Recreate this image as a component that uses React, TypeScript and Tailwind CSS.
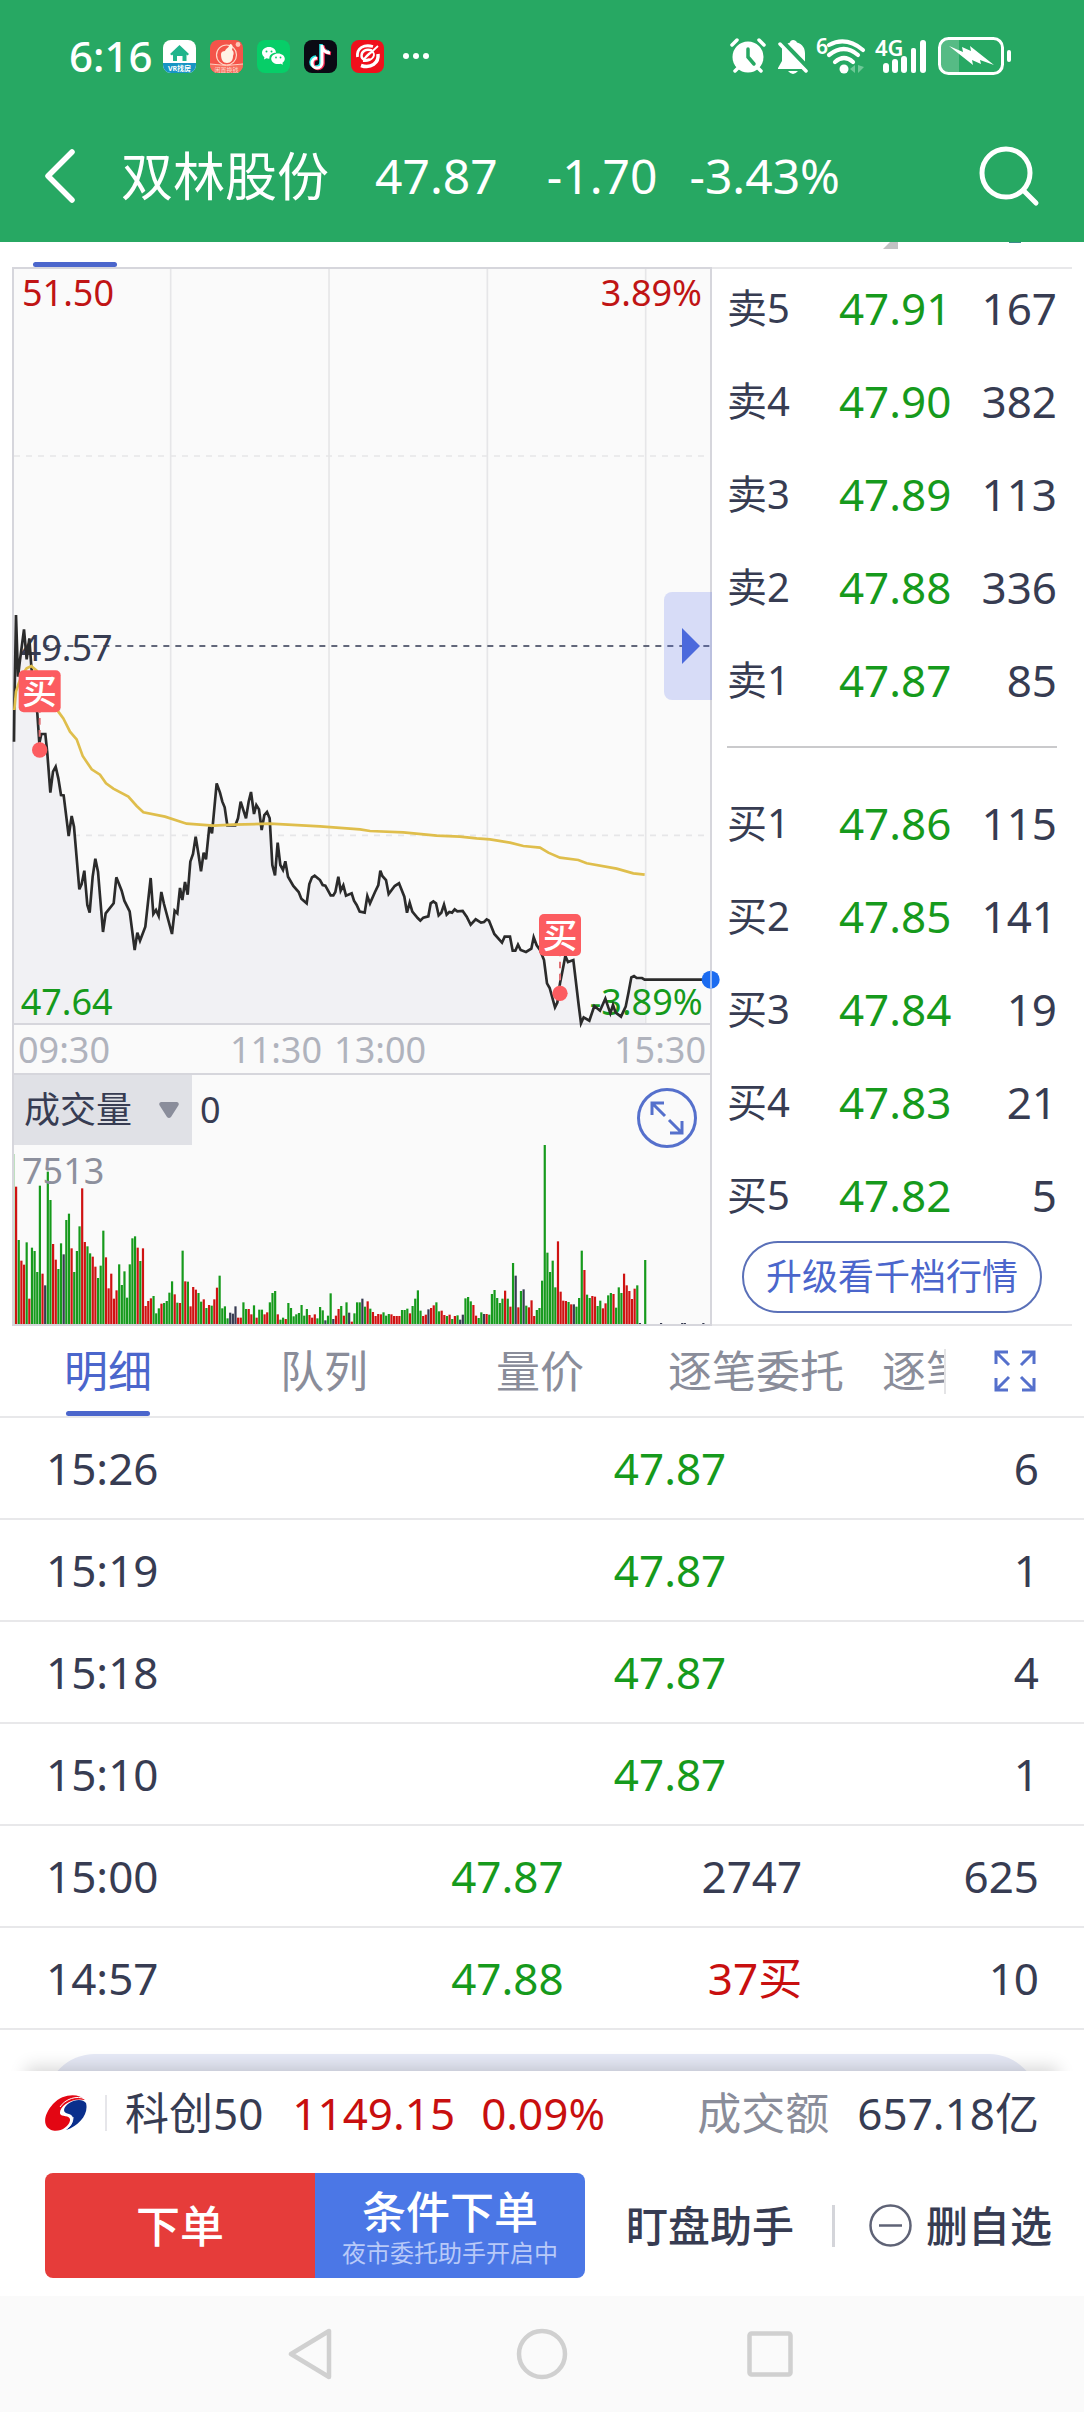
import React from "react";

/* Chart geometry: three drawing units per pixel. */
const PRICE_LINE =
  "42,425 43,330 48,45 54,230 60,180 72,88 80,178 88,115 94,200 104,300 112,340 118,430 124,402 136,402 142,460 151,578 159,515 167,500 175,535 183,585 191,586 206,708 215,648 222,680 238,868 245,852 253,812 262,915 269,938 278,830 286,776 294,815 309,996 317,940 341,910 349,832 365,872 373,902 389,934 404,1050 412,998 420,1022 436,980 452,834 460,942 468,930 476,948 484,876 492,912 516,1002 524,932 532,940 540,864 547,900 555,846 563,884 571,785 579,762 587,710 595,760 603,814 611,758 618,778 628,680 636,700 650,550 660,578 667,605 674,622 682,676 706,676 714,655 722,605 738,655 746,605 753,576 762,642 769,615 777,628 785,690 793,645 801,636 809,655 817,795 825,826 833,728 841,795 849,810 856,784 864,830 880,858 896,876 904,896 920,910 928,852 936,832 944,827 960,840 968,855 976,857 992,886 1000,886 1006,876 1015,830 1022,872 1030,856 1038,887 1055,880 1062,902 1070,915 1079,935 1094,938 1102,888 1110,910 1125,876 1135,855 1141,812 1147,828 1158,840 1166,882 1184,858 1197,850 1213,890 1221,938 1229,908 1237,935 1253,954 1261,962 1270,953 1285,949 1292,910 1300,904 1308,910 1316,946 1324,938 1332,914 1340,944 1348,936 1356,938 1364,928 1372,934 1388,933 1400,950 1412,974 1427,958 1443,968 1452,966 1460,958 1467,962 1483,1002 1506,1028 1514,1010 1530,1010 1538,1052 1546,1052 1554,1034 1562,1050 1578,1056 1594,1046 1601,1012 1610,1036 1620,1050 1632,1080 1641,1150 1649,1164 1665,1222 1672,1208 1680,1150 1688,1110 1696,1068 1704,1086 1720,1080 1736,1215 1743,1270 1751,1252 1768,1262 1783,1218 1800,1232 1816,1196 1831,1240 1839,1215 1847,1238 1863,1250 1877,1220 1886,1175 1894,1132 1902,1128 1910,1134 1926,1134 1934,1139";

const AVERAGE_LINE =
  "43,330 48,275 56,250 66,225 80,205 94,198 110,212 140,270 175,335 190,355 210,395 230,418 248,468 275,508 300,524 318,550 340,566 385,590 410,618 430,637 495,650 560,671 640,677 700,674 809,671 960,679 1080,688 1110,693 1210,697 1310,707 1380,710 1430,715 1470,718 1530,728 1570,738 1620,743 1645,758 1680,773 1735,780 1760,790 1850,806 1900,820 1934,824";

/* One bar per minute: colour letter and the y of the bar's top. */
const VOLUME_BARS =
  "r380 g540 r602 r614 g547 r716 g563 g573 g636 g377 r641 k676 g335 g420 r552 r599 g627 g550 k583 g480 g461 r565 g636 g573 g499 r385 r546 g559 g580 r590 r620 g654 g617 g512 r592 r685 r641 r716 r691 g613 g675 g634 g713 g613 g535 g529 r563 g603 r565 r738 r723 r715 g708 g760 g745 r731 g729 g723 g698 g664 r703 g728 r729 g572 r664 g665 r739 r681 r689 g699 g725 r718 g744 r735 g737 r718 r683 g647 g745 g739 g775 k758 k761 k739 r773 r773 g727 g747 r747 r763 g736 r773 g749 g749 r763 r757 g727 g699 g693 r763 g779 g773 r777 g729 g744 g769 g763 g759 g735 g767 g747 r765 r773 r763 g775 g741 g751 k781 g767 g700 k777 r767 r747 g738 r767 g727 k758 r785 g760 g727 g727 k716 g740 r724 g746 r756 r768 r762 r763 g757 g767 g762 r763 r768 r768 r768 g750 g750 g746 r760 g738 g716 g691 g752 r768 r764 k748 r744 r736 g727 g754 r752 r765 g768 r764 g777 r768 g766 k779 k764 g715 g711 g724 r735 r767 g774 g757 k762 r762 g764 g702 g690 g714 g729 g716 r692 g716 r740 g609 k647 r742 g693 k688 g737 r742 r721 r768 g750 g744 g662 g255 g578 g636 g602 g682 r544 r695 r722 r723 g726 r733 k733 g740 g714 g572 r630 g704 g714 r708 r710 g738 g722 r745 r730 g706 g699 r702 g743 g682 g699 r641 r676 r693 r717 r686 g676 k789 k792 g600 k792 k792 k792 k792 k792 k789 k792 k792 k792 k792 k792 k792 k792 k789 k789 k792 k792 k792 k792 k792 k792 k789";

const BAR_FILL: Record<string, string> = { g: "#169a1c", r: "#cf1212", k: "#373c52" };

const SELLS = [
  ["卖5", "47.91", "167"],
  ["卖4", "47.90", "382"],
  ["卖3", "47.89", "113"],
  ["卖2", "47.88", "336"],
  ["卖1", "47.87", "85"],
];
const BUYS = [
  ["买1", "47.86", "115"],
  ["买2", "47.85", "141"],
  ["买3", "47.84", "19"],
  ["买4", "47.83", "21"],
  ["买5", "47.82", "5"],
];

const TRADES = [
  { time: "15:26", price: "47.87", qty: "6" },
  { time: "15:19", price: "47.87", qty: "1" },
  { time: "15:18", price: "47.87", qty: "4" },
  { time: "15:10", price: "47.87", qty: "1" },
  { time: "15:00", price: "47.87", count: "2747", qty: "625" },
  { time: "14:57", price: "47.88", count: "37买", up: true, qty: "10" },
];

function StatusBar() {
  return (
    <div className="flex h-28 items-center pl-[69px] pr-[72px] text-white">
      <span className="w-[94px] text-[42px] leading-[56px] font-medium">6:16</span>
      <div className="flex gap-[14px]">
        <svg className="size-[33px]" viewBox="0 0 33 33">
          <rect width="33" height="33" rx="8" fill="#fff" />
          <path d="M0 23h33v2a8 8 0 0 1-8 8H8a8 8 0 0 1-8-8z" fill="#1795c4" />
          <path d="M16.500 5 26 14l-1.500 1.500-1-1V21h-4v-5h-5.500v5h-4v-6.500l-1 1L7 14z" fill="#20b58c" />
          <text x="16.500" y="31" textAnchor="middle" fontSize="7" fontWeight="700" fill="#fff">VR找房</text>
        </svg>
        <svg className="size-[33px]" viewBox="0 0 33 33">
          <rect width="33" height="33" rx="8" fill="#f4544a" />
          <circle cx="16.500" cy="15" r="10" fill="none" stroke="#ffd9c8" strokeWidth="1.200" />
          <path d="M11 14c0-2 2-3 4-3 1-3 4-3 5-7 3 0 3 3 2 6 2 1 2 4 1 6 0 4-2 7-6 7-4 0-6-3-6-9z" fill="#fff1e4" />
          <circle cx="28" cy="4.500" r="2.400" fill="#ffc2b4" />
          <path d="M0 24q16.500 3 33 0v1a8 8 0 0 1-8 8H8a8 8 0 0 1-8-8z" fill="#f76d5c" />
          <path d="M0 24q16.500 3 33 0" fill="none" stroke="#ffd0c0" />
          <text x="16.500" y="32" textAnchor="middle" fontSize="6" fill="#ffd8cc">闲置换钱</text>
        </svg>
        <svg className="size-[33px]" viewBox="0 0 33 33">
          <rect width="33" height="33" rx="8" fill="#07ce68" />
          <path d="M12 7c4.200 0 7 2.700 7 5.800-4.200 0-7 2.400-6.500 5.800-1 .1-2 0-3-.3L7 19.600l.4-2.300C6 16.200 5 14.700 5 12.800 5 9.600 8 7 12 7z" fill="#fff" />
          <path d="M21 13.500c3.800 0 6.800 2.300 6.800 5.300 0 1.700-.9 3-2.300 4l.3 2-2-1c-.9.200-1.800.3-2.800.3-3.800 0-6.800-2.300-6.800-5.300s3-5.300 6.800-5.300z" fill="#fff" />
          <circle cx="9.500" cy="11.500" r="1" fill="#07ce68" />
          <circle cx="14.500" cy="11.500" r="1" fill="#07ce68" />
          <circle cx="19" cy="17.500" r=".9" fill="#07ce68" />
          <circle cx="23.500" cy="17.500" r=".9" fill="#07ce68" />
        </svg>
        <svg className="size-[33px]" viewBox="0 0 33 33" fill="none" strokeWidth="3.600">
          <rect width="33" height="33" rx="8" fill="#0a0a14" />
          <path d="M17 4v18a5 5 0 1 1-5-5M17 5c.5 4 3.500 6.500 8 7" stroke="#27e8e4" />
          <path d="M19 5.500v18a5 5 0 1 1-5-5M19 6.500c.5 4 3.500 6.500 8 7" stroke="#fb2b55" />
          <path d="M18 5v18a5 5 0 1 1-5-5M18 6c.5 4 3.500 6.500 8 7" stroke="#fff" strokeWidth="3" />
        </svg>
        <svg className="size-[33px]" viewBox="0 0 33 33" fill="none" stroke="#fff">
          <rect width="33" height="33" rx="8" fill="#f0101c" stroke="none" />
          <path d="M22 6.500C13 4 5.500 8 6.500 17" strokeWidth="2.800" />
          <path d="M27 14c1 9-7 15-17 11.500" strokeWidth="3.500" />
          <path d="M21 10.500c-6-2-10.500.5-10.500 5.500 0 4 6 5 8.500 3" strokeWidth="2.400" />
          <path d="M27 6 13 19c3-4 6-7 9-7 3 4-2 10-10 9" strokeWidth="1.800" />
        </svg>
      </div>
      <svg className="ml-[18px] h-2 w-7" viewBox="0 0 28 8" fill="#fff">
        <circle cx="4" cy="4" r="3" />
        <circle cx="14" cy="4" r="3" />
        <circle cx="24" cy="4" r="3" />
      </svg>
      <div className="ml-auto flex items-center">
        <svg className="h-9 w-9" viewBox="0 0 36 36" fill="none" stroke="#fff" strokeLinecap="round">
          <circle cx="18" cy="19" r="15.500" fill="#fff" stroke="none" />
          <path d="M2 7 7 2M34 7l-5-5M5 33l5-5M31 33l-5-5" strokeWidth="3.500" />
          <path d="M18 11v8l6 7" stroke="#27a863" strokeWidth="3.500" />
        </svg>
        <svg className="ml-3 h-9 w-[30px]" viewBox="0 0 30 36">
          <path d="M9.500 5.500 12 4.500C12 1 18 1 19 4.500c6 2 8 6 8 11v8z" fill="#fff" />
          <path d="M4 9v14l-4 7v1h25z" fill="#fff" />
          <path d="m2 6 26 27" stroke="#fff" strokeWidth="3.500" strokeLinecap="round" />
          <path d="M10 33h10q-5 6-10 0z" fill="#fff" />
        </svg>
        <svg className="ml-2 h-9 w-[50px] overflow-visible" viewBox="0 0 50 36" fill="none" stroke="#fff" strokeWidth="4.200">
          <text x="0" y="16" fontSize="21" fontWeight="600" fill="#fff" stroke="none">6</text>
          <path d="M13 7q17-9 34 5" strokeLinecap="round" />
          <path d="M13 17q15-12 29 0M19 24q9-8 18 0" strokeLinecap="round" />
          <circle cx="28" cy="31" r="4.500" fill="#fff" stroke="none" />
          <path d="m34 31 5-4v8zM48 29l-6-2v8z" fill="#6fc897" stroke="none" />
        </svg>
        <svg className="ml-[10px] h-9 w-[51px] overflow-visible" viewBox="0 0 51 36" fill="#fff">
          <text x="-1" y="18" fontSize="22" fontWeight="600">4G</text>
          <rect x="7" y="25" width="6" height="10" rx="3" />
          <rect x="16" y="21" width="6" height="14" rx="3" />
          <rect x="25" y="18" width="6" height="17" rx="3" />
          <rect x="35" y="10" width="5" height="25" rx="2" />
          <rect x="44" y="2" width="6" height="33" rx="3" />
        </svg>
        <svg className="ml-[11px] h-[38px] w-[74px]" viewBox="0 0 74 38">
          <path d="M11 1h10v36H11A10 10 0 0 1 1 27V11A10 10 0 0 1 11 1z" fill="#fff" opacity=".22" />
          <rect x="1.500" y="1.500" width="63" height="35" rx="9" fill="none" stroke="#fff" strokeWidth="3" />
          <rect x="69" y="13" width="4" height="12" rx="2" fill="#fff" />
          <path d="m11 9 14 6-1-5 9 4-1-5 24 19-14-5 1 4-9-4 1 5z" fill="#fff" />
        </svg>
      </div>
    </div>
  );
}

function TitleBar() {
  return (
    <div className="flex h-[130px] items-center pl-[44px] pr-[44px] pb-[2px] text-[48px] leading-[60px] text-white">
      <button aria-label="返回" className="w-[77px]">
        <svg className="h-14 w-8" viewBox="0 0 32 56" fill="none" stroke="#fff" strokeWidth="5.500" strokeLinecap="round" strokeLinejoin="round">
          <path d="M28 4 4 28l24 24" />
        </svg>
      </button>
      <h1 className="text-[52px] font-normal">双林股份</h1>
      <span className="ml-[46px]">47.87</span>
      <span className="ml-[49px]">-1.70</span>
      <span className="ml-[32px]">-3.43%</span>
      <button aria-label="搜索" className="ml-auto">
        <svg className="size-[62px]" viewBox="0 0 62 62" fill="none" stroke="#fff" strokeWidth="5" strokeLinecap="round">
          <circle cx="28" cy="28" r="24" />
          <path d="m46 46 12 12" />
        </svg>
      </button>
    </div>
  );
}

function BuyMark({ x, y, dotY }: { x: number; y: number; dotY: number }) {
  return (
    <g>
      <path d={`M${x} ${y + 62}V${dotY}`} stroke="#e07074" strokeWidth="6" strokeDasharray="20 16" strokeDashoffset="-18" />
      <circle cx={x} cy={dotY} r="23" fill="#fc5c60" />
      <rect x={x - 63} y={y - 63} width="126" height="126" rx="15" fill="#fc5c60" />
      <text x={x} y={y + 39} textAnchor="middle" fontSize="104" fill="#fff" fontWeight="500">买</text>
    </g>
  );
}

function PriceChart() {
  return (
    <div className="relative z-10 border-2 border-[#d6d6dc] bg-[#fafafa] text-[36px] leading-[44px]">
      <div className="absolute top-0.5 left-2 text-[#c01414]">51.50</div>
      <div className="absolute top-0.5 right-2 text-[#c01414]">3.89%</div>
      <svg className="block w-full overflow-visible" viewBox="42 -993 2088 2262" fill="none">
        <g stroke="#e6e6e8" strokeWidth="5">
          <path d="M512-993V1269M987-993V1269M1462-993V1269M1937-993V1269" />
          <path d="M42-432H2130M42 706H2130" strokeDasharray="18 18" />
        </g>
        <polygon points={`42,1269 ${PRICE_LINE} 1934,1269`} fill="#f1f1f4" />
        <path d="M130 138H2130" stroke="#62677a" strokeWidth="6" strokeDasharray="18 18" />
        <text x="62" y="183" fontSize="108" fill="#373c52">49.57</text>
        <text x="62" y="1244" fontSize="108" fill="#169a1c">47.64</text>
        <text x="2108" y="1244" fontSize="108" fill="#169a1c" textAnchor="end">-3.89%</text>
        <polyline points={`${PRICE_LINE} 2130,1139`} stroke="#2b2b2b" strokeWidth="8" />
        <polyline points={AVERAGE_LINE} stroke="#dfbe4c" strokeWidth="8" />
        <BuyMark x={119} y={274} dotY={450} />
        <BuyMark x={1680} y={1005} dotY={1180} />
        <circle cx="2132" cy="1139" r="27" fill="#1c6cf0" />
        <path d="M2133 1112v54" stroke="#b9cdf2" strokeWidth="5" />
      </svg>
      <button aria-label="展开" className="absolute top-[323px] -right-[2px] flex h-[108px] w-12 items-center rounded-l-lg bg-[#5b73ec]/22 pl-[18px]">
        <svg className="h-9 w-[18px]" viewBox="0 0 18 36"><path d="M0 0 18 18 0 36z" fill="#4b69dc" /></svg>
      </button>
    </div>
  );
}

function VolumeChart() {
  return (
    <div className="relative border-2 border-[#d6d6dc] bg-[#fafafa] text-[36px] leading-[48px] text-[#373c52]">
      <div className="absolute top-0 left-0 flex items-center">
        <button className="flex h-[70px] w-[178px] items-center justify-between bg-[#e0e1e6] pr-[13px] pl-[10px]">
          成交量
          <svg className="h-4 w-5" viewBox="0 0 20 16"><path d="M2 0h16q3 1 1 4l-7 11q-2 2-4 0L1 4q-2-3 1-4z" fill="#8a8d9b" /></svg>
        </button>
        <span className="pl-2">0</span>
      </div>
      <div className="absolute top-[72px] left-2 text-[#8d909d]">7513</div>
      <svg className="block w-full" viewBox="42 45 2088 747">
        <rect x="42" y="282" width="3" height="510" fill="#bfe0c0" />
        {VOLUME_BARS.split(" ").map((bar, i) => {
          const top = Number(bar.slice(1));
          return <rect key={i} x={45 + i * 7.93} y={top} width="6.600" height={792 - top} fill={BAR_FILL[bar[0]]} />;
        })}
      </svg>
      <button aria-label="全屏" className="absolute top-[13px] right-[13px]">
        <svg className="size-[60px]" viewBox="0 0 60 60" fill="none" stroke="#5570cc" strokeWidth="3">
          <circle cx="30" cy="30" r="28.500" />
          <path d="M28 28 15 15M15 27V15h12M32 32l13 13M45 33v12H33" />
        </svg>
      </button>
    </div>
  );
}

function Book({ rows }: { rows: string[][] }) {
  return (
    <table className="w-full table-fixed">
      <tbody>
        {rows.map(([label, price, qty]) => (
          <tr key={label} className="h-[93px] text-[44px] leading-[56px]">
            <th scope="row" className="w-[30%] p-0 text-left text-[40px] font-normal">{label}</th>
            <td className="w-[38%] p-0 text-right text-[#169a1c]">{price}</td>
            <td className="p-0 text-right">{qty}</td>
          </tr>
        ))}
      </tbody>
    </table>
  );
}

function Tabs() {
  return (
    <div className="flex h-[92px] items-stretch border-b-2 border-[#e8e8ea] text-[44px] leading-[56px] text-[#8a8d9a]">
      <div className="flex min-w-0 flex-1 overflow-hidden">
        <button className="relative w-[216px] shrink-0 text-[#4b66cc]">
          明细
          <span className="absolute bottom-0 left-[66px] h-[5px] w-[84px] rounded-sm bg-[#4b66cc]" />
        </button>
        <button className="w-[216px] shrink-0">队列</button>
        <button className="w-[216px] shrink-0">量价</button>
        <button className="w-[216px] shrink-0">逐笔委托</button>
        <button className="w-[216px] shrink-0 pl-[18px] text-left">逐笔</button>
      </div>
      <div className="my-auto h-[45px] w-[2px] bg-[#e4e4e6]" />
      <button aria-label="全屏" className="flex w-[138px] items-center justify-center">
        <svg className="size-[42px]" viewBox="0 0 42 42" fill="none" stroke="#5570cc" strokeWidth="3">
          <path d="M15 15 2 2M2 14V2h12M27 15 40 2M28 2h12v12M15 27 2 40M2 28v12h12M27 27l13 13M40 28v12H28" />
        </svg>
      </button>
    </div>
  );
}

function Trades() {
  return (
    <table className="w-full table-fixed border-separate border-spacing-0 text-[44px] leading-[56px]">
      <colgroup>
        <col className="w-[20%]" />
        <col className="w-[32%]" />
        <col className="w-[15%]" />
        <col className="w-[7%]" />
        <col className="w-[26%]" />
      </colgroup>
      <tbody>
        {TRADES.map((t) => (
          <tr key={t.time} className="h-[102px] *:border-b-2 *:border-[#e8e8ea]">
            <td className="p-0 pl-[46px]">{t.time}</td>
            {t.count ? (
              <>
                <td className="p-0 text-right text-[#169a1c]">{t.price}</td>
                <td colSpan={2} className={t.up ? "p-0 text-right text-[#c80f0f]" : "p-0 text-right"}>{t.count}</td>
                <td className="p-0 pr-[45px] text-right">{t.qty}</td>
              </>
            ) : (
              <>
                <td colSpan={2} className="p-0 text-right text-[#169a1c]">{t.price}</td>
                <td colSpan={2} className="p-0 pr-[45px] text-right">{t.qty}</td>
              </>
            )}
          </tr>
        ))}
      </tbody>
    </table>
  );
}

function Footer() {
  return (
    <footer className="relative bg-white pb-[18px] shadow-[0_-30px_16px_-26px_rgba(0,0,0,0.16)]">
      <div className="flex h-[102px] items-center pr-[45px] pl-[45px] pb-[18px] text-[44px] leading-[56px]">
        <svg className="h-9 w-[42px]" viewBox="0 0 42 36">
          <path d="M40 5C34-2 18-2 8 9-2 20-3 33 8 35.500c8 1.500 16-4 17-10 1-6-9-3-10-7C14 12 26 2 40 5z" fill="#e30613" />
          <path d="M41 8C36 1 20 7 19 15c0 5 8 2 9 8 0 6-4 9-7 12C34 31 44 19 41 8z" fill="#0a2f8c" />
          <path d="M40 4C32 0 20 4 15 12M20 35c5-3 8-7 8-13" fill="none" stroke="#fff" strokeWidth="1" />
        </svg>
        <span className="ml-[18px] h-9 w-[2px] bg-[#e6e6ea]" />
        <span className="ml-[18px]">科创50</span>
        <span className="ml-[29px] text-[#c80f0f]">1149.15</span>
        <span className="ml-[26px] text-[#c80f0f]">0.09%</span>
        <span className="ml-auto text-[#8a8d9a]">成交额</span>
        <span className="ml-[28px]">657.18亿</span>
      </div>
      <div className="flex h-[105px] items-center pr-[32px] pl-[45px] text-[42px] leading-[54px] font-medium">
        <div className="flex h-full w-[540px] overflow-hidden rounded-lg text-[44px] text-white">
          <button className="w-1/2 bg-[#e63c3a]">下单</button>
          <button className="flex w-1/2 flex-col items-center bg-[#4b77e6] pt-[15px]">
            <span className="leading-[48px]">条件下单</span>
            <span className="text-[24px] leading-[34px] font-normal text-[#b8c9f8]">夜市委托助手开启中</span>
          </button>
        </div>
        <button className="ml-[41px]">盯盘助手</button>
        <span className="ml-auto h-[42px] w-[3px] bg-[#d4d5da]" />
        <button className="ml-[34px] flex items-center gap-[14px]">
          <svg className="size-[43px]" viewBox="0 0 43 43" fill="none" stroke="#5f6376" strokeWidth="2.500">
            <circle cx="21.500" cy="21.500" r="20" />
            <path d="M10 21.500h23" />
          </svg>
          删自选
        </button>
      </div>
    </footer>
  );
}

function NavBar() {
  return (
    <nav className="grid h-[116px] grid-cols-[1fr_170px_170px_170px_1fr] items-center bg-[#fafafa]">
      <span />
      <button aria-label="后退" className="justify-self-start">
        <svg className="h-[52px] w-[46px]" viewBox="0 0 46 52" fill="none" stroke="#d0d0d0" strokeWidth="4.500" strokeLinejoin="round"><path d="M42 3v46L4 26z" /></svg>
      </button>
      <button aria-label="主页" className="justify-self-center">
        <svg className="size-[52px]" viewBox="0 0 52 52" fill="none" stroke="#d0d0d0" strokeWidth="4.500"><circle cx="26" cy="26" r="23" /></svg>
      </button>
      <button aria-label="最近任务" className="mr-1 justify-self-end">
        <svg className="size-[46px]" viewBox="0 0 46 46" fill="none" stroke="#d0d0d0" strokeWidth="4.500"><rect x="2.500" y="2.500" width="41" height="41" rx="2" /></svg>
      </button>
      <span />
    </nav>
  );
}

export default function App() {
  return (
    <div className="w-full overflow-hidden bg-white font-['Noto_Sans','Noto_Sans_CJK_SC',sans-serif] text-[#373c52]">
      <header className="bg-[#27a863]">
        <StatusBar />
        <TitleBar />
      </header>

      <div className="flex h-[25px] items-start pr-[63px] pl-[33px]">
        <span className="h-[5px] w-[84px] self-end rounded-sm bg-[#4b66cc]" />
        <svg className="ml-auto h-[7px] w-[15px]" viewBox="0 0 15 7"><path d="M7 0h8v7H0z" fill="#c2c2c4" /></svg>
        <span className="ml-[111px] h-px w-3 bg-[#3f8a8c]" />
      </div>

      <main>
        <div className="mr-3 ml-3 flex">
          <section className="w-[700px] shrink">
            <PriceChart />
            <div className="flex h-[48px] items-center border-x-2 border-[#d6d6dc] bg-[#fafafa] px-1 pt-[2px] text-[36px] leading-[44px] text-[#b0b3bd]">
              <span>09:30</span>
              <span className="ml-[120px]">11:30</span>
              <span className="ml-3">13:00</span>
              <span className="ml-auto">15:30</span>
            </div>
            <VolumeChart />
          </section>
          <section className="flex min-w-0 flex-1 flex-col border-y-2 border-[#e8e8ea] pr-[15px] pl-[15px]">
            <div className="-mt-2"><Book rows={SELLS} /></div>
            <div className="mt-[20px] mb-[28px] h-[2px] bg-[#cacacc]" />
            <Book rows={BUYS} />
            <button className="mx-auto h-[72px] w-[300px] rounded-full border-2 border-[#5a70b8] text-[36px] leading-[48px] text-[#4b66cc]">升级看千档行情</button>
          </section>
        </div>
        <Tabs />
        <Trades />
        <div className="mx-[45px] mt-[24px] h-[17px] overflow-hidden">
          <div className="h-[100px] rounded-[50px] bg-[#e6e9f6]" />
        </div>
      </main>
      <Footer />
      <NavBar />
    </div>
  );
}
